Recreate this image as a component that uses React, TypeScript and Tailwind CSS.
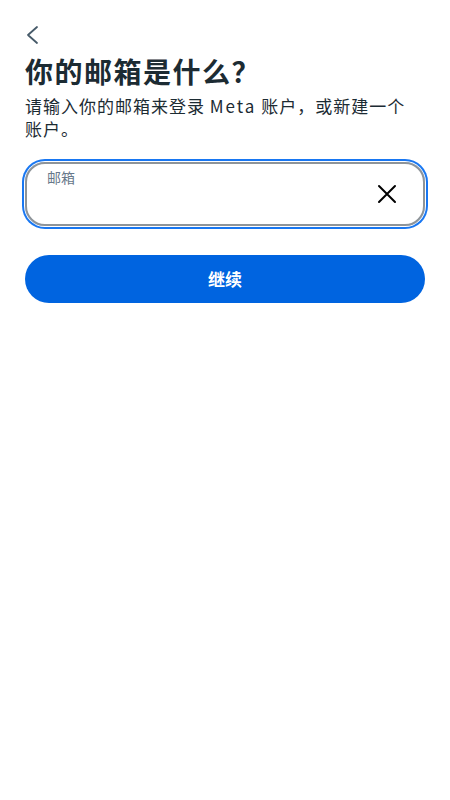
import { useState } from 'react';

export default function App() {
  const [email, setEmail] = useState('');

  return (
    <div
      className="min-h-[800px] w-full bg-white px-[25px] pt-[24px]"
      style={{ fontFamily: '"Noto Sans CJK SC", "Noto Sans", sans-serif' }}
    >
      {/* back */}
      <button className="flex h-[22px] w-[16px] items-center text-[#465a69]">
        <svg width="14" height="20" viewBox="0 0 14 20" fill="none">
          <path d="M12 2 L3 10 L12 18" stroke="currentColor" strokeWidth="1.8" strokeLinecap="round" strokeLinejoin="round" />
        </svg>
      </button>

      <h1 className="mt-[7px] text-[28px] font-bold leading-[36px] tracking-[1.5px] text-[#1c2b33]">你的邮箱是什么？</h1>
      <p className="mt-[5px] text-[17px] leading-[23px] tracking-[1px] text-[#1c2b33]">
        请输入你的邮箱来登录 <span className="tracking-[2px]">Meta</span> 账户，或新建一个
        <br />
        账户。
      </p>

      {/* email field */}
      <div className="mt-[22px] flex h-[64px] items-center rounded-[20px] border-2 border-[#8e9499] ring-2 ring-[#1877f2] ring-offset-1 pl-[20px] pr-[26px]">
        <div className="flex flex-1 flex-col self-stretch pt-[4px]">
          <label className="text-[14px] leading-[18px] text-[#67788a]">邮箱</label>
          <input
            value={email}
            onChange={e => setEmail(e.target.value)}
            className="w-full bg-transparent text-[16px] text-[#1c2b33] outline-none"
          />
        </div>
        <button className="text-black">
          <svg width="20" height="20" viewBox="0 0 20 20" fill="none">
            <path d="M2 2 L18 18 M18 2 L2 18" stroke="currentColor" strokeWidth="2" strokeLinecap="round" />
          </svg>
        </button>
      </div>

      <button className="mt-[29px] flex h-[48px] w-full items-center justify-center rounded-full bg-[#0064e0] text-[17px] font-bold text-white">
        继续
      </button>
    </div>
  );
}
